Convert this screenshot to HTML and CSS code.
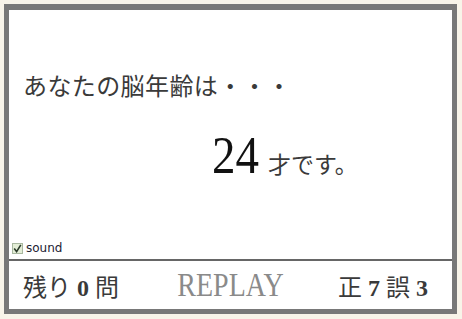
FILE: index.html
```html
<!DOCTYPE html>
<html lang="ja">
<head>
    <meta charset="UTF-8">
    <title>脳年齢</title>
    <link rel="stylesheet" href="styles.css">
</head>
<body>
    <div class="board">
        <div class="main">
            <div class="question">あなたの脳年齢は・・・</div>
            <div class="answer">
                <span class="age">24</span>
                <span class="unit">才です。</span>
            </div>
            <label class="sound">
                <span class="check">
                    <svg width="9" height="9" viewBox="0 0 9 9"><path d="M1.2 4.6 L3.6 7.6 L7.8 0.8" fill="none" stroke="#2a3a2a" stroke-width="1.6"/></svg>
                </span>
                sound
            </label>
        </div>
        <div class="footer">
            <span class="left">残り <b>0</b> 問</span>
            <span class="replay">REPLAY</span>
            <span class="right">正 <b>7</b> 誤 <b>3</b></span>
        </div>
    </div>
</body>
</html>
```

FILE: styles.css
```css
* {
    margin: 0;
    padding: 0;
    box-sizing: border-box;
}

body {
    background: #f8f4e9;
    font-family: "Liberation Serif", "Noto Sans CJK JP", serif;
    color: #3a3a3a;
}

.board {
    margin: 4px 0 0 4px;
    width: 453px;
    height: 310px;
    border: 5px solid #787878;
    border-top-width: 6px;
    background: #fff;
    display: flex;
    flex-direction: column;
}

.main {
    flex: 1;
    display: flex;
    flex-direction: column;
    padding: 65px 0 4px 14px;
}

.question {
    font-size: 24px;
    line-height: 24px;
    letter-spacing: 0.4px;
}

.answer {
    display: flex;
    align-items: baseline;
    padding-left: 189px;
    margin-top: 38px;
}

.age {
    display: inline-block;
    font-size: 47px;
    line-height: 40px;
    color: #111;
    transform: scaleY(1.12);
    transform-origin: bottom;
    margin-right: 9px;
}

.unit {
    font-size: 23px;
}

.sound {
    margin-top: auto;
    margin-left: -11px;
    display: flex;
    align-items: center;
    gap: 3px;
    font-family: "DejaVu Sans", sans-serif;
    font-size: 12px;
    color: #223;
}

.check {
    width: 11px;
    height: 11px;
    border: 1px solid #a9b8a0;
    background: #e3edd6;
    display: flex;
    align-items: center;
    justify-content: center;
}

.footer {
    height: 50px;
    border-top: 2px solid #666;
    display: grid;
    grid-template-columns: 1fr auto 1fr;
    align-items: center;
    padding: 0 24px;
    font-size: 24px;
}

.footer b {
    font-weight: bold;
}

.left {
    justify-self: start;
    margin-left: -10px;
}

.replay {
    font-size: 28px;
    color: #8a8a8a;
    display: inline-block;
    transform: scaleY(1.2);
}

.right {
    justify-self: end;
}
```
